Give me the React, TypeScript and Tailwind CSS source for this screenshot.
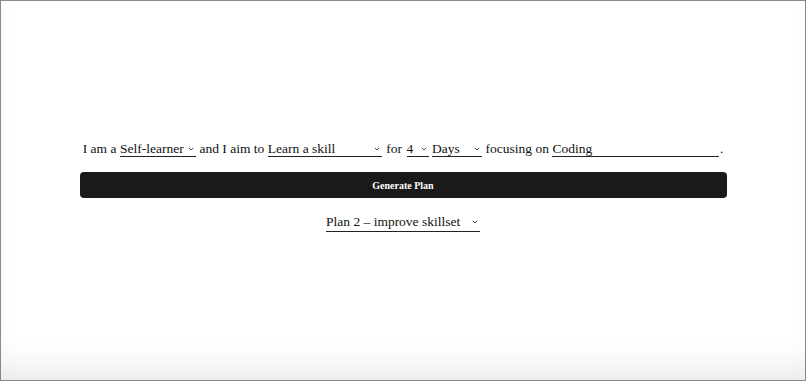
import React from "react";

function Chevron() {
  return (
    <svg width="6" height="4" viewBox="0 0 6 4" className="shrink-0">
      <path d="M0.8 0.8 L3 3 L5.2 0.8" fill="none" stroke="#333" strokeWidth="0.9" />
    </svg>
  );
}

function Sel({ label, w }: { label: string; w: string }) {
  return (
    <span className={`inline-flex items-center justify-between border-b border-[#222] h-[19px] pt-[3px] pr-[2px] ${w}`}>
      <span className="leading-none">{label}</span>
      <Chevron />
    </span>
  );
}

export default function App() {
  return (
    <div
      className="w-[806px] h-[381px] border border-[#8a8a8a] bg-white flex flex-col items-center justify-center text-[#111] shadow-[inset_0_-28px_32px_-16px_rgba(0,0,0,0.09)]"
      style={{ fontFamily: '"Liberation Serif", "Times New Roman", serif' }}
    >
      <div className="w-[647px] flex flex-col items-center mb-[10px]">
        <div className="flex items-end gap-[3.5px] text-[13.5px] whitespace-nowrap">
          <span className="leading-none pb-[2px]">I am a</span>
          <Sel label="Self-learner" w="w-[76px]" />
          <span className="leading-none pb-[2px]">and I aim to</span>
          <Sel label="Learn a skill" w="w-[114px]" />
          <span className="leading-none pb-[2px] px-[1px]">for</span>
          <Sel label="4" w="w-[22px]" />
          <Sel label="Days" w="w-[50px]" />
          <span className="leading-none pb-[2px]">focusing on</span>
          <span className="inline-flex items-center border-b border-[#222] h-[19px] pt-[3px] w-[167px]">
            <span className="leading-none">Coding</span>
          </span>
          <span className="leading-none pb-[2px] -ml-[3px]">.</span>
        </div>
        <button className="mt-[15px] w-[647px] h-[26px] rounded-[4px] bg-[#1a1a1a] text-white text-[10px] font-bold">
          Generate Plan
        </button>
        <div className="mt-[11px]">
          <span className="inline-flex items-center justify-between border-b border-[#222] h-[22px] w-[154px] pt-[2px] pr-[2px] text-[13.5px] whitespace-nowrap">
            <span className="leading-none">Plan 2 – improve skillset</span>
            <Chevron />
          </span>
        </div>
      </div>
    </div>
  );
}
